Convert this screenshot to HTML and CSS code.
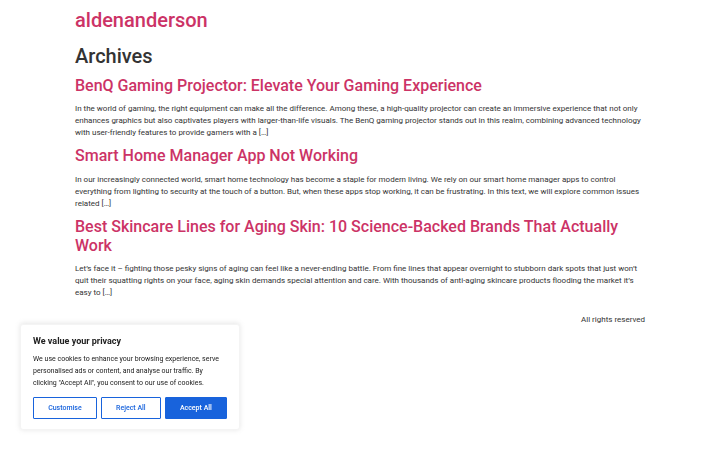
FILE: index.html
```html
<!DOCTYPE html>
<html lang="en">
<head>
<meta charset="utf-8">
<title>Archives - aldenanderson</title>
<link rel="stylesheet" href="styles.css">
</head>
<body>
<header class="site-header">
  <h1 class="site-title"><a href="#">aldenanderson</a></h1>
</header>
<main class="site-main">
  <div class="page-header">
    <h1 class="page-title">Archives</h1>
  </div>
  <div class="page-content">
    <article class="post">
      <h2 class="entry-title"><a href="#">BenQ Gaming Projector: Elevate Your Gaming Experience</a></h2>
      <p>In the world of gaming, the right equipment can make all the difference. Among these, a high-quality projector can create an immersive experience that not only enhances graphics but also captivates players with larger-than-life visuals. The BenQ gaming projector stands out in this realm, combining advanced technology with user-friendly features to provide gamers with a […]</p>
    </article>
    <article class="post">
      <h2 class="entry-title"><a href="#">Smart Home Manager App Not Working</a></h2>
      <p>In our increasingly connected world, smart home technology has become a staple for modern living. We rely on our smart home manager apps to control everything from lighting to security at the touch of a button. But, when these apps stop working, it can be frustrating. In this text, we will explore common issues related […]</p>
    </article>
    <article class="post">
      <h2 class="entry-title"><a href="#">Best Skincare Lines for Aging Skin: 10 Science-Backed Brands That Actually Work</a></h2>
      <p>Let’s face it – fighting those pesky signs of aging can feel like a never-ending battle. From fine lines that appear overnight to stubborn dark spots that just won’t quit their squatting rights on your face, aging skin demands special attention and care. With thousands of anti-aging skincare products flooding the market it’s easy to […]</p>
    </article>
  </div>
</main>
<footer class="site-footer">
  <p class="copyright">All rights reserved</p>
</footer>

<div class="cky-consent">
  <div class="cky-title">We value your privacy</div>
  <p class="cky-desc">We use cookies to enhance your browsing experience, serve personalised ads or content, and analyse our traffic. By clicking "Accept All", you consent to our use of cookies.</p>
  <div class="cky-btns">
    <button class="cky-btn cky-btn-outline">Customise</button>
    <button class="cky-btn cky-btn-outline">Reject All</button>
    <button class="cky-btn cky-btn-accept">Accept All</button>
  </div>
</div>
</body>
</html>
```

FILE: styles.css
```css
html, body {
  margin: 0;
  padding: 0;
}
body {
  background: #fff;
  color: #333;
  font-family: Roboto, "Liberation Sans", sans-serif;
  font-size: 8px;
  line-height: 1.5;
}
a {
  color: #c36;
  text-decoration: none;
}
.site-header,
.site-main,
.site-footer {
  max-width: 570px;
  margin-left: auto;
  margin-right: auto;
}
.site-header {
  padding: 8px 0;
}
.site-title {
  margin: 0;
  font-size: 20px;
  line-height: 1.2;
  font-weight: 500;
}
.page-title {
  margin: 4px 0 8px;
  font-size: 20px;
  line-height: 1.2;
  font-weight: 500;
  color: #333;
}
.entry-title {
  margin: 4px 0 8px;
  font-size: 16px;
  line-height: 1.2;
  font-weight: 500;
}
.post p {
  margin: 0 0 7.2px;
}
.site-footer {
  padding: 8px 0;
  text-align: right;
}
.copyright {
  margin: 0;
}

/* cookie notice */
.cky-consent {
  position: fixed;
  left: 20px;
  bottom: 20px;
  width: 220px;
  box-sizing: border-box;
  background: #fff;
  border: 0.5px solid #f4f4f4;
  border-radius: 3px;
  padding: 10px 12px;
  box-shadow: 0 -0.5px 5px 0 rgba(172, 171, 171, 0.3);
  color: #212121;
}
.cky-title {
  font-size: 9px;
  line-height: 12px;
  font-weight: 700;
  margin: 0 0 6px;
  color: #212121;
}
.cky-desc {
  margin: 0;
  font-size: 7px;
  line-height: 12px;
  color: #212121;
}
.cky-btns {
  display: flex;
  gap: 4px;
  margin-top: 8px;
}
.cky-btn {
  flex: auto;
  font-family: inherit;
  font-size: 7px;
  line-height: 12px;
  font-weight: 500;
  padding: 4px 6px;
  border: 1px solid #1863dc;
  border-radius: 1px;
  cursor: pointer;
}
.cky-btn-outline {
  background: transparent;
  color: #1863dc;
}
.cky-btn-accept {
  background: #1863dc;
  color: #fff;
}
```
